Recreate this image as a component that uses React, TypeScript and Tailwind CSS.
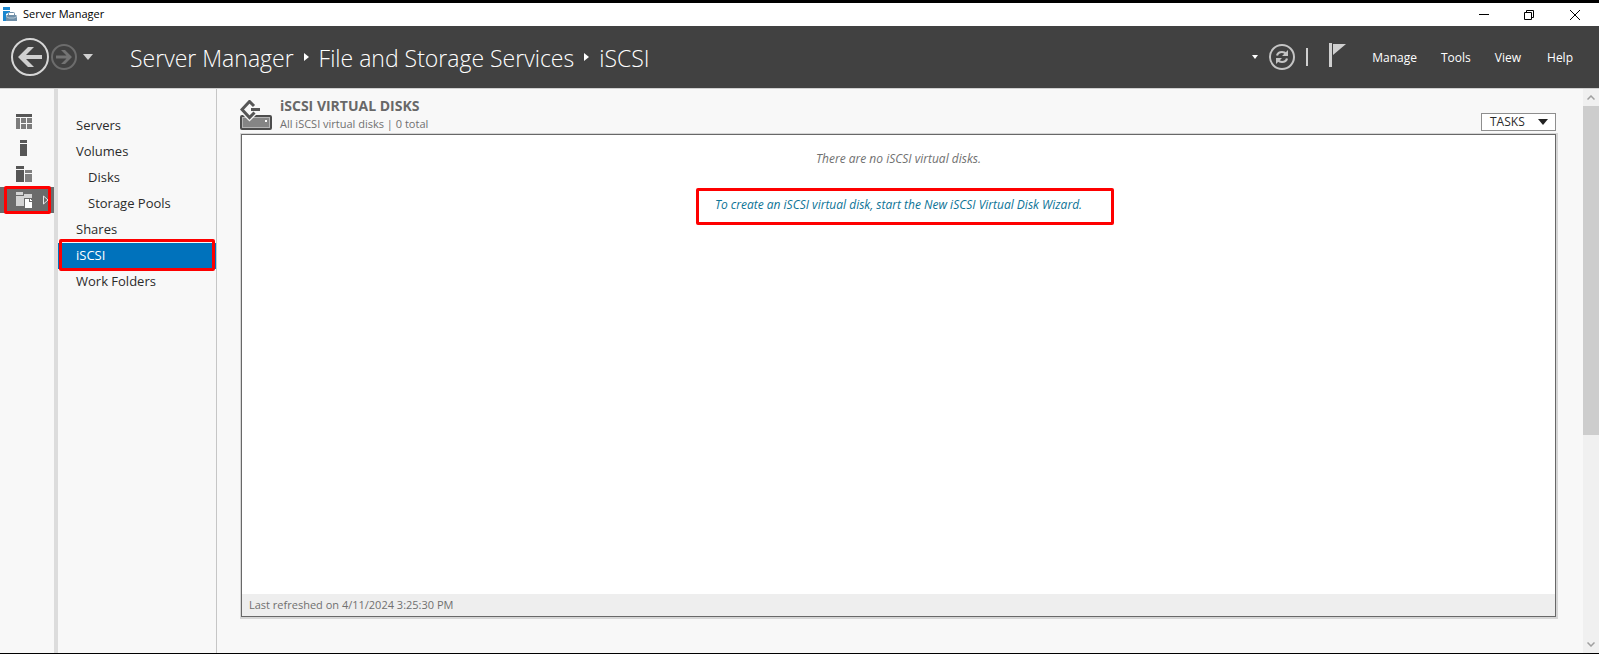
import type { ReactNode } from "react";

const railItems: { label: string; icon: ReactNode }[] = [
  {
    label: "Dashboard",
    icon: (
      <>
        <path fill="#565656" d="M0 0h16v3H0z" />
        <path fill="#7c7c7c" d="M0 4h4v11H0zM5 4h5v5H5zM11 4h5v5h-5zM5 10h5v5H5zM11 10h5v5h-5z" />
      </>
    ),
  },
  {
    label: "Local Server",
    icon: <path fill="#565656" d="M4 0h7v3H4zM4 4h7v12H4z" />,
  },
  {
    label: "All Servers",
    icon: (
      <>
        <path fill="#565656" d="M0 0h8v3H0zM0 4h8v12H0z" />
        <path fill="#808080" d="M9 4h7v3H9zM9 8h7v8H9z" />
      </>
    ),
  },
  {
    label: "File and Storage Services",
    icon: (
      <>
        <path fill="#d4d4d4" d="M0 0h6l1 1v2H0zM0 4h8V2h8v4H8v8H0z" />
        <path fill="#fff" d="M9 7h4v3h3v6H9z" />
        <path fill="#fff" d="M14 7l2 2h-2z" />
      </>
    ),
  },
];

const navItems = [
  { label: "Servers" },
  { label: "Volumes" },
  { label: "Disks", nested: true },
  { label: "Storage Pools", nested: true },
  { label: "Shares" },
  { label: "iSCSI", selected: true },
  { label: "Work Folders" },
];

function TitleBar() {
  return (
    <div className="flex h-[26px] shrink-0 items-center justify-between border-t-3 border-black bg-white">
      <div className="flex items-center gap-1.5 pl-[3px]">
        <svg width="14" height="15" viewBox="0 0 14 15" aria-hidden="true">
          <path fill="#1b87cf" d="M0 0h7v3H0zM0 4h7v1L3 7v7H0z" />
          <path fill="#6f8fa8" d="M4 8h9l1 1v5H3V9z" />
          <path fill="none" stroke="#6f8fa8" d="M5.500 8V6.500q0-1 1-1h4q1 0 1 1V8" />
          <path stroke="#b4c5d2" d="M3 9.500l3 1.500h5l3-1.500" fill="none" />
        </svg>
        <h1 className="text-[11px] text-black">Server Manager</h1>
      </div>
      <div className="flex h-full">
        <button aria-label="Minimize" className="flex w-[45px] items-center justify-center">
          <svg width="10" height="10" viewBox="0 0 10 10"><path stroke="#000" d="M0 4.500h10" /></svg>
        </button>
        <button aria-label="Restore" className="flex w-[45px] items-center justify-center">
          <svg width="10" height="10" viewBox="0 0 10 10" fill="none" stroke="#000">
            <path d="M.5 2.500h7v7h-7zM2.500 2.500v-2h7v7h-2" />
          </svg>
        </button>
        <button aria-label="Close" className="flex w-12 items-center justify-center">
          <svg width="10" height="10" viewBox="0 0 10 10" stroke="#000"><path d="M0 0l10 10M10 0L0 10" /></svg>
        </button>
      </div>
    </div>
  );
}

function Crumb() {
  return (
    <svg className="mx-2.5 mb-0.5" width="5" height="8" viewBox="0 0 5 8" aria-hidden="true">
      <path fill="#fff" d="M0 0l5 4-5 4z" />
    </svg>
  );
}

function Header() {
  return (
    <header className="flex h-[63px] shrink-0 items-center justify-between border-b border-[#cfcfcf] bg-[#414141] text-white">
      <div className="flex items-center pl-[11px]">
        <button aria-label="Back">
          <svg width="38" height="38" viewBox="0 0 38 38" fill="none">
            <circle cx="19" cy="19" r="18" stroke="#d6d6d6" strokeWidth="2" />
            <path fill="#cfcfcf" d="M7 19L17 9h6l-8 8h16v4H15l8 8h-6z" />
          </svg>
        </button>
        <button aria-label="Forward" className="ml-0.5">
          <svg width="26" height="26" viewBox="0 0 26 26" fill="none">
            <circle cx="13" cy="13" r="12" stroke="#6c6c6c" strokeWidth="2" />
            <path fill="#737373" d="M21 13l-7-7h-4l5.500 5.500H5v3h10.500L10 20h4z" />
          </svg>
        </button>
        <button aria-label="History" className="ml-1.5">
          <svg width="10" height="6" viewBox="0 0 10 6"><path fill="#d0d0d0" d="M0 0h10L5 6z" /></svg>
        </button>
        <nav aria-label="Breadcrumb" className="ml-[37px] flex items-center pt-0.5 text-[23px] leading-8 font-light whitespace-nowrap">
          <a href="#server-manager">Server Manager</a>
          <Crumb />
          <a href="#storage">File and Storage Services</a>
          <Crumb />
          <a href="#iscsi">iSCSI</a>
        </nav>
      </div>
      <div className="flex items-center pr-[26px]">
        <button aria-label="Refresh options">
          <svg width="6" height="4" viewBox="0 0 6 4"><path fill="#fff" d="M0 0h6L3 4z" /></svg>
        </button>
        <button aria-label="Refresh" className="ml-[11px]">
          <svg width="26" height="26" viewBox="0 0 26 26" fill="none">
            <circle cx="13" cy="13" r="12" stroke="#c4c4c4" strokeWidth="2" />
            <path stroke="#c4c4c4" strokeWidth="2.200" d="M8 11.500q1-3.500 5-3.500 2.500 0 4.500 2M18 14.500q-1 3.500-5 3.500-2.500 0-4.500-2" />
            <path fill="#c4c4c4" d="M19 6v6h-6zM7 20v-6h6z" />
          </svg>
        </button>
        <span className="ml-[11px] h-[18px] w-0.5 bg-[#d0d0d0]" />
        <button aria-label="Notifications" className="mb-1 ml-[21px]">
          <svg width="17" height="24" viewBox="0 0 17 24">
            <path fill="#cfcfcf" d="M0 0h3v24H0zM4 1h13L4 12z" />
          </svg>
        </button>
        <nav aria-label="Main menu" className="ml-[26px] flex items-center gap-6 pt-0.5 text-xs font-medium">
          <button>Manage</button>
          <button>Tools</button>
          <button>View</button>
          <button className="ml-0.5">Help</button>
        </nav>
      </div>
    </header>
  );
}

function Rail() {
  return (
    <nav aria-label="Server roles" className="w-[54px] shrink-0 pt-5">
      {railItems.map((item, i) => {
        const active = i === railItems.length - 1;
        return (
          <a
            key={item.label}
            href="#role"
            aria-label={item.label}
            className={`relative flex h-[26px] items-center pl-4 ${active ? "bg-[#6b6b6b]" : ""}`}
          >
            <svg width="16" height="16" viewBox="0 0 16 16" shapeRendering="crispEdges">{item.icon}</svg>
            {active && (
              <>
                <svg className="ml-[11px]" width="6" height="10" viewBox="0 0 6 10" fill="none">
                  <path stroke="#e8e8e8" d="M.5 1v8L5 5z" />
                </svg>
                <span className="absolute -inset-y-px right-[3px] left-1 rounded-xs border-3 border-[#fe0000]" />
              </>
            )}
          </a>
        );
      })}
    </nav>
  );
}

function SideNav() {
  return (
    <nav aria-label="File and Storage Services" className="w-[159px] shrink-0 border-r border-[#c6c6c6] pt-6 text-[13px] text-[#2b2b2b]">
      {navItems.map((item) => (
        <a
          key={item.label}
          href="#section"
          className={`relative flex h-[26px] items-center ${item.nested ? "pl-[30px]" : "pl-[18px]"} ${
            item.selected ? "bg-[#0072bc] text-white" : ""
          }`}
        >
          {item.label}
          {item.selected && <span className="absolute -top-1 right-px -bottom-0.5 left-px rounded-xs border-3 border-[#fe0000]" />}
        </a>
      ))}
    </nav>
  );
}

function VirtualDisks() {
  return (
    <main className="flex min-w-0 flex-1 flex-col pt-2 pr-[25px] pb-[34px] pl-[23px]">
      <div className="flex items-end justify-between">
        <div className="flex items-center">
          <svg width="32" height="31" viewBox="0 0 32 31" fill="none" aria-hidden="true">
            <rect x="1" y="16" width="30" height="13" rx="1" fill="#858585" stroke="#4d4d4d" strokeWidth="2" />
            <rect x="2.500" y="17.500" width="27" height="10" stroke="#b5b5b5" />
            <path fill="#fff" d="M25 20h2v2h-2z" />
            <path fill="#f7f7f7" d="M2 14h15l-7.500 7.500z" />
            <path stroke="#565656" strokeWidth="3" d="M14 6L9.500 1.500 2 9.500l7.500 8 5-5" />
            <path fill="#565656" d="M11 8h9v3h-9z" />
          </svg>
          <div className="ml-2 text-[11px] leading-[18px] text-[#707070]">
            <h2 className="text-sm leading-[18px] font-bold text-[#686868]">iSCSI VIRTUAL DISKS</h2>
            <p>All iSCSI virtual disks | 0 total</p>
          </div>
        </div>
        <button className="mr-0.5 mb-0.5 flex h-[18px] w-[75px] items-center justify-between border border-[#8e8e8e] bg-white pr-[7px] pl-2 text-xs leading-4 text-[#2b2b2b]">
          TASKS
          <svg width="10" height="6" viewBox="0 0 10 6" aria-hidden="true"><path fill="#222" d="M0 0h10L5 6z" /></svg>
        </button>
      </div>
      <section className="flex flex-1 flex-col bg-[#d6d6d6] pt-px pr-0.5 pb-0.5 pl-px text-xs">
        <div className="flex flex-1 flex-col border border-[#686868] bg-white">
          <div className="flex flex-1 flex-col items-center pt-4 italic">
            <p className="leading-4 text-[#707070]">There are no iSCSI virtual disks.</p>
            <div className="relative mt-[30px] leading-4">
              <a href="#new-disk" className="text-[#0c7396]">
                To create an iSCSI virtual disk, start the New iSCSI Virtual Disk Wizard.
              </a>
              <span className="pointer-events-none absolute -top-[9px] -right-8 -bottom-3 -left-[19px] rounded-xs border-3 border-[#fe0000]" />
            </div>
          </div>
          <footer className="flex h-[22px] items-center bg-[#eee] pl-[7px] text-[11px] text-[#707070]">
            Last refreshed on 4/11/2024 3:25:30 PM
          </footer>
        </div>
      </section>
    </main>
  );
}

function Scrollbar() {
  return (
    <div className="flex w-4 shrink-0 flex-col bg-[#f0f0f0]">
      <button aria-label="Scroll up" className="flex h-[17px] items-center justify-center">
        <svg width="8" height="5" viewBox="0 0 8 5" fill="none"><path stroke="#a0a0a0" strokeWidth="1.500" d="M.5 4.500L4 1l3.500 3.500" /></svg>
      </button>
      <div className="flex-1">
        <div className="h-[62%] bg-[#cdcdcd]" />
      </div>
      <button aria-label="Scroll down" className="flex h-[17px] items-center justify-center">
        <svg width="8" height="5" viewBox="0 0 8 5" fill="none"><path stroke="#a0a0a0" strokeWidth="1.500" d="M.5.5L4 4 7.500.5" /></svg>
      </button>
    </div>
  );
}

export default function App() {
  return (
    <div className="flex min-h-screen flex-col border-b border-black bg-[#f8f8f8] font-['Open_Sans','Noto_Sans',sans-serif]">
      <TitleBar />
      <Header />
      <div className="flex flex-1">
        <Rail />
        <div className="w-1 shrink-0 bg-[#dcdcdc]" />
        <SideNav />
        <VirtualDisks />
        <Scrollbar />
      </div>
    </div>
  );
}
